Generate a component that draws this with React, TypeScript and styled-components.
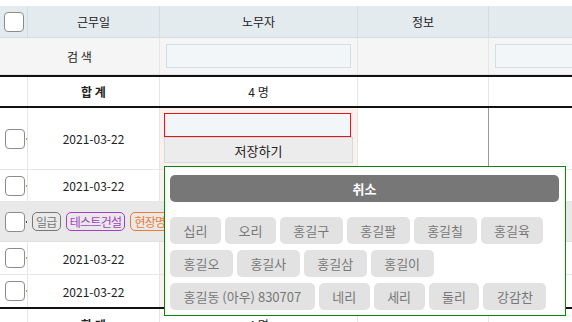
import React from "react";
import styled, { createGlobalStyle } from "styled-components";

const GlobalStyle = createGlobalStyle`
  html, body { margin: 0; padding: 0; background: #fff; overflow: hidden; }
  body { font-family: "Noto Sans CJK KR", "Noto Sans", sans-serif; color: #222; }
  * { box-sizing: border-box; }
`;

const Page = styled.div`
  padding-top: 6px;
  width: 700px;
`;

const Row = styled.div<{ $h: number; $bg?: string; $top?: string; $bottom?: string }>`
  display: grid;
  grid-template-columns: 28px 132px 198px 131px 1fr;
  height: ${(p) => p.$h}px;
  background: ${(p) => p.$bg ?? "#fff"};
  border-top: ${(p) => p.$top ?? "none"};
  border-bottom: ${(p) => p.$bottom ?? "1px solid #e6e6e6"};
`;

const Cell = styled.div<{ $line?: string; $bg?: string; $bold?: boolean; $size?: number }>`
  display: flex;
  align-items: center;
  justify-content: center;
  border-right: 1px solid ${(p) => p.$line ?? "#e6e6e6"};
  background: ${(p) => p.$bg ?? "transparent"};
  font-size: ${(p) => p.$size ?? 12}px;
  font-weight: ${(p) => (p.$bold ? 700 : 400)};
  color: #222;
  min-width: 0;
  padding: 0 6px;
`;

const SearchLabel = styled(Cell)`
  grid-column: 1 / 3;
`;

const CheckCell = styled.div<{ $line?: string; $pad?: number }>`
  display: flex;
  align-items: center;
  padding-left: ${(p) => p.$pad ?? 5}px;
  border-right: 1px solid ${(p) => p.$line ?? "#e6e6e6"};
`;

const Check = styled.span`
  display: inline-block;
  width: 20px;
  height: 20px;
  border: 1px solid #8c8c8c;
  border-radius: 4px;
  background: #fff;
  flex: none;
`;

const Dot = styled.span<{ $c: string }>`
  display: inline-block;
  width: 1px;
  height: 2px;
  margin-left: 1px;
  background: ${(p) => p.$c};
  flex: none;
`;

const SearchInput = styled.div`
  width: 100%;
  height: 24px;
  background: #f3f6f8;
  border: 1px solid #cfdfe3;
`;

const EditCell = styled.div`
  border-right: 1px solid #e6e6e6;
  background: #fdf1f0;
  padding: 5px 0 0 4px;
`;

const PinkCell = styled.div`
  border-right: 1px solid #e6e6e6;
  background: #fdf1f0;
`;

const Editor = styled.div`
  position: relative;
  display: flex;
  flex-direction: column;
  width: 189px;
`;

const RedInput = styled.div`
  width: 187px;
  height: 24px;
  background: #f3f6f8;
  border: 1px solid #ee1111;
`;

const SaveButton = styled.div`
  width: 189px;
  height: 26px;
  background: #ececec;
  border: 1px solid #cfdcdf;
  display: flex;
  align-items: center;
  justify-content: center;
  font-size: 13px;
  color: #222;
`;

const Popup = styled.div`
  position: absolute;
  top: calc(100% + 3px);
  left: 0;
  width: 402px;
  height: 150px;
  background: #fff;
  border: 1px solid #0a850a;
  padding: 8px 6px 5px 5px;
  z-index: 5;
`;

const Cancel = styled.div`
  height: 27px;
  border-radius: 5px;
  background: #777777;
  color: #fff;
  font-weight: 700;
  font-size: 13px;
  display: flex;
  align-items: center;
  justify-content: center;
  margin-bottom: 15px;
`;

const Chips = styled.div`
  display: flex;
  flex-wrap: wrap;
  gap: 6px 4px;
`;

const Chip = styled.div`
  height: 27px;
  padding: 0 13.5px;
  border-radius: 5px;
  background: #e2e2e2;
  color: #777;
  font-size: 13px;
  display: flex;
  align-items: center;
  white-space: nowrap;
`;

const GroupRow = styled.div`
  display: flex;
  align-items: center;
  height: 40px;
  background: #e9e9e9;
  border-bottom: 1px solid #e0e0e0;
  padding-left: 5px;
`;

const Tag = styled.span<{ $c: string }>`
  display: inline-flex;
  align-items: center;
  height: 19px;
  padding: 0 3px;
  margin-left: 5px;
  border: 1px solid ${(p) => p.$c};
  border-radius: 5px;
  color: ${(p) => p.$c};
  font-size: 12px;
  letter-spacing: -0.7px;
  white-space: nowrap;
`;

const HEAD_LINE = "#d3dee2";

const names = [
  "십리", "오리", "홍길구", "홍길팔", "홍길칠", "홍길육",
  "홍길오", "홍길사", "홍길삼", "홍길이",
  "홍길동 (아우) 830707", "네리", "세리", "둘리", "강감찬",
];

const DataRow: React.FC<{ h?: number; bottom?: string }> = ({ h = 32, bottom }) => (
  <Row $h={h} $bottom={bottom}>
    <CheckCell>
      <Check />
      <Dot $c="#d08a3a" />
    </CheckCell>
    <Cell>2021-03-22</Cell>
    <PinkCell />
    <Cell />
    <Cell />
  </Row>
);

const SumRow: React.FC<{ top: string; bottom: string }> = ({ top, bottom }) => (
  <Row $h={33} $top={top} $bottom={bottom}>
    <CheckCell />
    <Cell $bold>합 계</Cell>
    <Cell>4 명</Cell>
    <Cell />
    <Cell />
  </Row>
);

export default function App() {
  return (
    <>
      <GlobalStyle />
      <Page>
        <Row $h={32} $bg="#e4ebef" $bottom={`1px solid ${HEAD_LINE}`}>
          <CheckCell $line={HEAD_LINE} $pad={4}>
            <Check />
          </CheckCell>
          <Cell $line={HEAD_LINE}>근무일</Cell>
          <Cell $line={HEAD_LINE}>노무자</Cell>
          <Cell $line={HEAD_LINE}>정보</Cell>
          <Cell $line={HEAD_LINE} />
        </Row>
        <Row $h={37} $bg="#f5f5f5" $bottom="1px solid #e2e2e2">
          <SearchLabel>검 색</SearchLabel>
          <Cell>
            <SearchInput />
          </Cell>
          <Cell />
          <Cell>
            <SearchInput />
          </Cell>
        </Row>
        <SumRow top="2px solid #111" bottom="2px solid #111" />
        <Row $h={62}>
          <CheckCell>
            <Check />
            <Dot $c="#d08a3a" />
          </CheckCell>
          <Cell>2021-03-22</Cell>
          <EditCell>
            <Editor>
              <RedInput />
              <SaveButton>저장하기</SaveButton>
              <Popup>
                <Cancel>취소</Cancel>
                <Chips>
                  {names.map((n) => (
                    <Chip key={n}>{n}</Chip>
                  ))}
                </Chips>
              </Popup>
            </Editor>
          </EditCell>
          <Cell $line="#999" />
          <Cell />
        </Row>
        <DataRow h={32} />
        <GroupRow>
          <Check />
          <Dot $c="#444" />
          <Tag $c="#777">일급</Tag>
          <Tag $c="#a23fc4">테스트건설</Tag>
          <Tag $c="#ef7a30">현장명</Tag>
        </GroupRow>
        <DataRow h={33} />
        <DataRow h={32} bottom="none" />
        <SumRow top="2px solid #111" bottom="none" />
      </Page>
    </>
  );
}
